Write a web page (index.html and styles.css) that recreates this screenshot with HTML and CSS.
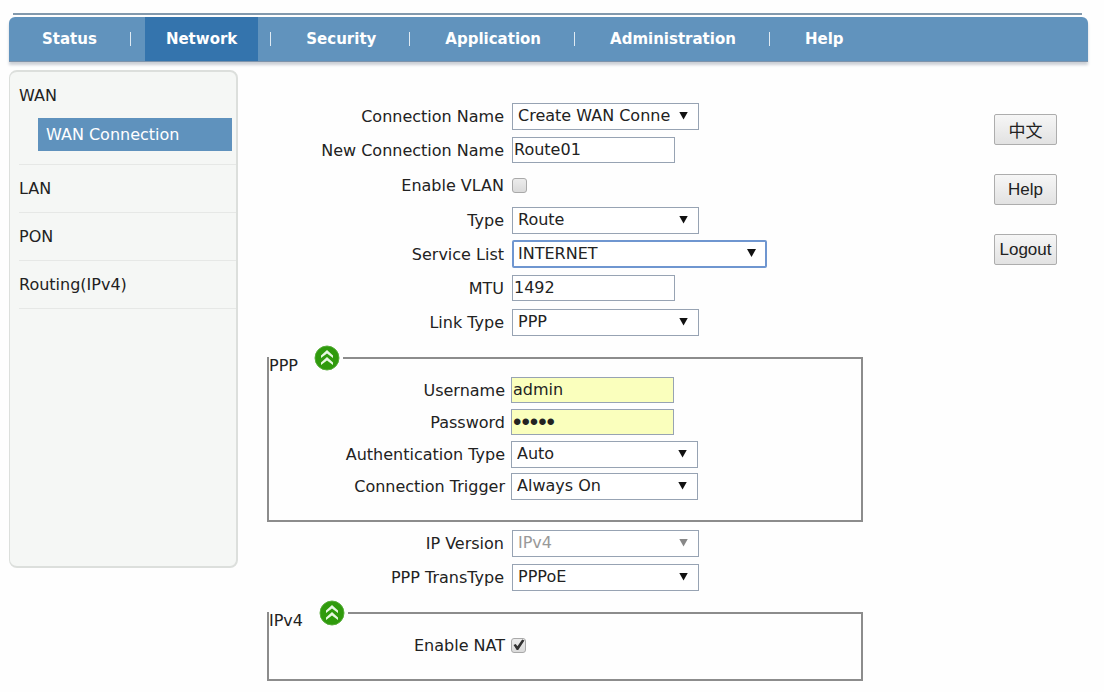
FILE: index.html
```html
<!DOCTYPE html>
<html lang="en">
<head>
  <meta charset="UTF-8" />
  <meta name="viewport" content="width=device-width, initial-scale=1.0"/>
  <title>WAN Connection</title>
  <link rel="stylesheet" href="styles.css">
</head>
<body>
<header>
  <nav>
    <a href="#">Status</a>
    <a href="#" class="active">Network</a>
    <a href="#">Security</a>
    <a href="#">Application</a>
    <a href="#">Administration</a>
    <a href="#">Help</a>
  </nav>
</header>

<div class="container">
  <aside class="sidebar">
    <div class="menu-group">
      <a href="#" class="menu-item">WAN</a>
      <a href="#" class="sub-item">WAN Connection</a>
    </div>
    <a href="#" class="menu-item">LAN</a>
    <a href="#" class="menu-item">PON</a>
    <a href="#" class="menu-item">Routing(IPv4)</a>
  </aside>

  <form class="wan-form">
    <div class="row">
      <label for="connName">Connection Name</label>
      <div class="select">
        <select id="connName"><option>Create WAN Connection</option></select>
      </div>
    </div>
    <div class="row">
      <label for="newName">New Connection Name</label>
      <input type="text" id="newName" value="Route01"/>
    </div>
    <div class="row check-row">
      <label for="vlan">Enable VLAN</label>
      <input type="checkbox" id="vlan"/>
    </div>
    <div class="row">
      <label for="type">Type</label>
      <div class="select">
        <select id="type"><option>Route</option><option>Bridge</option></select>
      </div>
    </div>
    <div class="row">
      <label for="service">Service List</label>
      <div class="select wide">
        <select id="service"><option>INTERNET</option></select>
      </div>
    </div>
    <div class="row">
      <label for="mtu">MTU</label>
      <input type="text" id="mtu" value="1492"/>
    </div>
    <div class="row">
      <label for="link">Link Type</label>
      <div class="select">
        <select id="link"><option>PPP</option><option>IP</option></select>
      </div>
    </div>

    <fieldset>
      <legend>
        <span>PPP</span>
        <button type="button" class="toggle" aria-label="Collapse PPP">
          <svg viewBox="0 0 26 26" width="26" height="26">
            <circle cx="13" cy="13" r="12" fill="#2f9a0c" stroke="#57ad3a"/>
            <path d="M13 5 L19 10.5 V13 L13 8.5 L7 13 V10.5 Z" fill="#e8f8e2"/>
            <path d="M13 12 L19 17.5 V20 L13 15.5 L7 20 V17.5 Z" fill="#e8f8e2"/>
          </svg>
        </button>
      </legend>
      <div class="row">
        <label for="user">Username</label>
        <input type="text" id="user" class="filled" value="admin"/>
      </div>
      <div class="row">
        <label for="pass">Password</label>
        <input type="password" id="pass" class="filled" value="admin"/>
      </div>
      <div class="row">
        <label for="auth">Authentication Type</label>
        <div class="select">
          <select id="auth"><option>Auto</option><option>PAP</option><option>CHAP</option></select>
        </div>
      </div>
      <div class="row">
        <label for="trigger">Connection Trigger</label>
        <div class="select">
          <select id="trigger"><option>Always On</option><option>Manual</option></select>
        </div>
      </div>
    </fieldset>

    <div class="row">
      <label for="ipver">IP Version</label>
      <div class="select off">
        <select id="ipver" disabled><option>IPv4</option></select>
      </div>
    </div>
    <div class="row">
      <label for="trans">PPP TransType</label>
      <div class="select">
        <select id="trans"><option>PPPoE</option></select>
      </div>
    </div>

    <fieldset>
      <legend>
        <span>IPv4</span>
        <button type="button" class="toggle" aria-label="Collapse IPv4">
          <svg viewBox="0 0 26 26" width="26" height="26">
            <circle cx="13" cy="13" r="12" fill="#2f9a0c" stroke="#57ad3a"/>
            <path d="M13 5 L19 10.5 V13 L13 8.5 L7 13 V10.5 Z" fill="#e8f8e2"/>
            <path d="M13 12 L19 17.5 V20 L13 15.5 L7 20 V17.5 Z" fill="#e8f8e2"/>
          </svg>
        </button>
      </legend>
      <div class="row">
        <label for="nat">Enable NAT</label>
        <input type="checkbox" id="nat" checked/>
      </div>
    </fieldset>
  </form>

  <div class="actions">
    <button type="button">中文</button>
    <button type="button">Help</button>
    <button type="button">Logout</button>
  </div>
</div>
</body>
</html>
```
FILE: styles.css
```css
* {
  box-sizing: border-box;
}

body {
  font-family: 'DejaVu Sans', Verdana, sans-serif;
  font-size: 16px;
  line-height: 20px;
  margin: 0;
  padding: 13px 16px 8px 9px;
  color: #222;
  background-color: #fefefe;
}

/* top bar */
header::before {
  content: "";
  display: block;
  height: 2px;
  margin: 0 6px 2px 4px;
  background-color: #8299ad;
}

nav {
  display: flex;
  height: 45px;
  padding-left: 12px;
  border-radius: 6px 6px 0 0;
  border-bottom: 1px solid #7d93ab;
  background-color: #6193bd;
  box-shadow: 0 3px 3px #ccd0d6;
}

nav a {
  display: flex;
  align-items: center;
  padding: 0 21px;
  font-size: 15px;
  font-weight: bold;
  text-decoration: none;
  color: #fff;
}

nav a.active {
  background-color: #3474ad;
}

/* separator between the tabs */
nav a + a {
  margin-left: 27px;
  position: relative;
}

nav a + a::before {
  content: "";
  position: absolute;
  left: -15px;
  width: 1px;
  height: 14px;
  background-color: #dfeaf3;
}

.container {
  display: flex;
  align-items: flex-start;
  margin-top: 8px;
}

/* left menu */
.sidebar {
  flex: none;
  width: 229px;
  min-height: 498px;
  padding: 1px 0 0 9px;
  border: 1px solid #dcdfdc;
  border-width: 2px 2px 2px 1px;
  border-radius: 8px;
  background-color: #f5f7f5;
}

.menu-item {
  display: flex;
  align-items: center;
  height: 48px;
  border-bottom: 1px solid #e6e8e6;
  text-decoration: none;
  color: #222;
}

.menu-group {
  padding-bottom: 13px;
  border-bottom: 1px solid #e6e8e6;
}

.menu-group .menu-item {
  height: 45px;
  border-bottom: none;
}

.sub-item {
  display: block;
  margin: 0 4px 0 19px;
  padding: 7px 8px 6px;
  text-decoration: none;
  color: #fff;
  background-color: #5f92bd;
}

/* form */
.wan-form {
  flex: 1;
  min-width: 0;
  margin: 29px 131px 0 29px;
}

.row {
  display: grid;
  grid-template-columns: 237px 1fr;
  column-gap: 8px;
  align-items: center;
  height: 34px;
}

.row.check-row {
  height: 36px;
}

.row label {
  padding-top: 2px;
  text-align: right;
  white-space: nowrap;
}

fieldset {
  margin: 3px 0 4px;
  padding: 0 0 18px;
  min-width: 0;
  border: 2px solid #8c8c8c;
}

fieldset .row {
  grid-template-columns: 236px 1fr;
  column-gap: 6px;
  height: 32px;
}

legend {
  display: flex;
  align-items: flex-end;
  gap: 16px;
  height: 32px;
  padding: 0 3px 0 0;
  line-height: 16px;
}

.toggle {
  align-self: center;
  width: 26px;
  height: 26px;
  padding: 0;
  border: none;
  background: none;
  cursor: pointer;
}

.toggle svg {
  display: block;
}

input[type="text"],
input[type="password"] {
  width: 163px;
  height: 26px;
  padding: 0 1px 2px;
  border: 1px solid #97a3b3;
  font: inherit;
  color: #222;
  background-color: #fff;
  outline: none;
}

input[type="password"] {
  padding-bottom: 0;
  font-family: 'Liberation Sans', sans-serif;
  font-size: 24px;
}

input.filled {
  background-color: #faffbd;
}

.select {
  position: relative;
  width: 187px;
}

.select.wide {
  width: 255px;
}

select {
  display: block;
  appearance: none;
  width: 100%;
  height: 27px;
  padding: 0 28px 0 5px;
  border: 1px solid #97a3b3;
  border-radius: 0;
  font: inherit;
  color: #222;
  background-color: #fff;
  outline: none;
}

.wide select {
  height: 28px;
  padding-left: 4px;
  border: 2px solid #6f96d0;
  border-radius: 2px;
}

.select::after {
  content: "";
  position: absolute;
  right: 11px;
  top: 9px;
  width: 9px;
  height: 8px;
  background-color: #111;
  clip-path: polygon(0 0, 100% 0, 50% 100%);
  pointer-events: none;
}

.off select {
  color: #999;
  opacity: 1;
}

.off::after {
  background-color: #888;
}

input[type="checkbox"] {
  appearance: none;
  width: 15px;
  height: 15px;
  margin: 0;
  border: 1px solid #a9a9a9;
  border-radius: 3px;
  background: linear-gradient(#ececec, #dadada);
}

input[type="checkbox"]:checked::before {
  content: "";
  display: block;
  width: 13px;
  height: 13px;
  background-color: #333;
  clip-path: polygon(12% 50%, 28% 42%, 42% 60%, 78% 8%, 96% 16%, 48% 88%, 36% 88%);
}

/* right buttons */
.actions {
  display: flex;
  flex-direction: column;
  gap: 29px;
  margin: 44px 31px 0 0;
}

.actions button {
  width: 63px;
  height: 31px;
  padding: 0;
  border: 1px solid #adadad;
  border-radius: 2px;
  font-family: 'Liberation Sans', 'Noto Sans CJK SC', sans-serif;
  font-size: 17px;
  color: #222;
  background: linear-gradient(#f6f6f6, #e2e2e2);
  cursor: pointer;
}
```
